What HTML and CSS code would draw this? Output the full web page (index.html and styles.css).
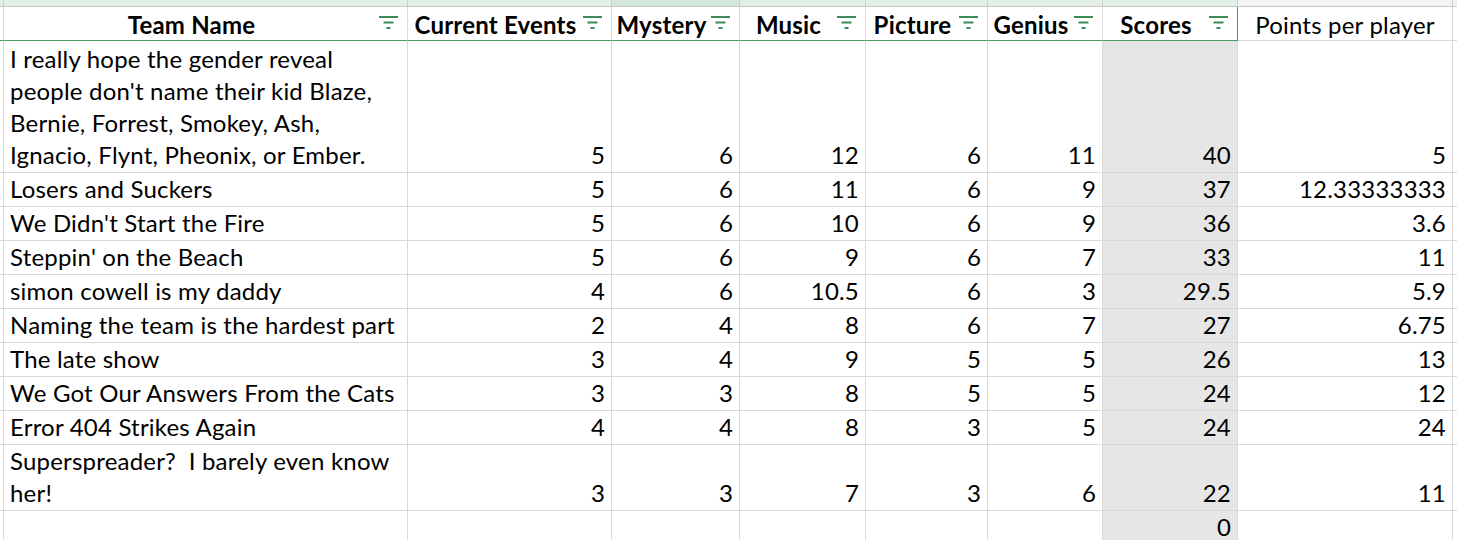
FILE: index.html
```html
<!DOCTYPE html>
<html>
<head>
<meta charset="utf-8">
<link rel="stylesheet" href="styles.css">
</head>
<body>
<div class="sheet">
  <!-- column header strip -->
  <div class="cell top"></div>
  <div class="cell top"></div>
  <div class="cell top"></div>
  <div class="cell top sel"></div>
  <div class="cell top"></div>
  <div class="cell top"></div>
  <div class="cell top"></div>
  <div class="cell top"></div>
  <div class="cell top out"></div>
  <div class="cell top out last"></div>

  <!-- header row -->
  <div class="cell hd stub"></div>
  <div class="cell hd"><span class="ht">Team Name</span><svg class="flt" viewBox="0 0 19 14"><rect x="0" y="0" width="19" height="2"/><rect x="4.5" y="5.5" width="10" height="2"/><rect x="7.5" y="11" width="4" height="2"/></svg></div>
  <div class="cell hd"><span class="ht">Current Events</span><svg class="flt" viewBox="0 0 19 14"><rect x="0" y="0" width="19" height="2"/><rect x="4.5" y="5.5" width="10" height="2"/><rect x="7.5" y="11" width="4" height="2"/></svg></div>
  <div class="cell hd"><span class="ht">Mystery</span><svg class="flt" viewBox="0 0 19 14"><rect x="0" y="0" width="19" height="2"/><rect x="4.5" y="5.5" width="10" height="2"/><rect x="7.5" y="11" width="4" height="2"/></svg></div>
  <div class="cell hd"><span class="ht">Music</span><svg class="flt" viewBox="0 0 19 14"><rect x="0" y="0" width="19" height="2"/><rect x="4.5" y="5.5" width="10" height="2"/><rect x="7.5" y="11" width="4" height="2"/></svg></div>
  <div class="cell hd"><span class="ht">Picture</span><svg class="flt" viewBox="0 0 19 14"><rect x="0" y="0" width="19" height="2"/><rect x="4.5" y="5.5" width="10" height="2"/><rect x="7.5" y="11" width="4" height="2"/></svg></div>
  <div class="cell hd"><span class="ht">Genius</span><svg class="flt" viewBox="0 0 19 14"><rect x="0" y="0" width="19" height="2"/><rect x="4.5" y="5.5" width="10" height="2"/><rect x="7.5" y="11" width="4" height="2"/></svg></div>
  <div class="cell hd hd-end"><span class="ht">Scores</span><svg class="flt" viewBox="0 0 19 14"><rect x="0" y="0" width="19" height="2"/><rect x="4.5" y="5.5" width="10" height="2"/><rect x="7.5" y="11" width="4" height="2"/></svg></div>
  <div class="cell hd-plain">Points per player</div>
  <div class="cell hd-plain last"></div>

  <!-- row 1 -->
  <div class="cell stub"></div>
  <div class="cell name">I really hope the gender reveal<br>people don't name their kid Blaze,<br>Bernie, Forrest, Smokey, Ash,<br>Ignacio, Flynt, Pheonix, or Ember.</div>
  <div class="cell num">5</div><div class="cell num">6</div><div class="cell num">12</div><div class="cell num">6</div><div class="cell num">11</div><div class="cell num score">40</div><div class="cell num">5</div><div class="cell last"></div>

  <div class="cell stub"></div>
  <div class="cell name">Losers and Suckers</div>
  <div class="cell num">5</div><div class="cell num">6</div><div class="cell num">11</div><div class="cell num">6</div><div class="cell num">9</div><div class="cell num score">37</div><div class="cell num">12.33333333</div><div class="cell last"></div>

  <div class="cell stub"></div>
  <div class="cell name">We Didn't Start the Fire</div>
  <div class="cell num">5</div><div class="cell num">6</div><div class="cell num">10</div><div class="cell num">6</div><div class="cell num">9</div><div class="cell num score">36</div><div class="cell num">3.6</div><div class="cell last"></div>

  <div class="cell stub"></div>
  <div class="cell name">Steppin' on the Beach</div>
  <div class="cell num">5</div><div class="cell num">6</div><div class="cell num">9</div><div class="cell num">6</div><div class="cell num">7</div><div class="cell num score">33</div><div class="cell num">11</div><div class="cell last"></div>

  <div class="cell stub"></div>
  <div class="cell name">simon cowell is my daddy</div>
  <div class="cell num">4</div><div class="cell num">6</div><div class="cell num">10.5</div><div class="cell num">6</div><div class="cell num">3</div><div class="cell num score">29.5</div><div class="cell num">5.9</div><div class="cell last"></div>

  <div class="cell stub"></div>
  <div class="cell name">Naming the team is the hardest part</div>
  <div class="cell num">2</div><div class="cell num">4</div><div class="cell num">8</div><div class="cell num">6</div><div class="cell num">7</div><div class="cell num score">27</div><div class="cell num">6.75</div><div class="cell last"></div>

  <div class="cell stub"></div>
  <div class="cell name">The late show</div>
  <div class="cell num">3</div><div class="cell num">4</div><div class="cell num">9</div><div class="cell num">5</div><div class="cell num">5</div><div class="cell num score">26</div><div class="cell num">13</div><div class="cell last"></div>

  <div class="cell stub"></div>
  <div class="cell name">We Got Our Answers From the Cats</div>
  <div class="cell num">3</div><div class="cell num">3</div><div class="cell num">8</div><div class="cell num">5</div><div class="cell num">5</div><div class="cell num score">24</div><div class="cell num">12</div><div class="cell last"></div>

  <div class="cell stub"></div>
  <div class="cell name">Error 404 Strikes Again</div>
  <div class="cell num">4</div><div class="cell num">4</div><div class="cell num">8</div><div class="cell num">3</div><div class="cell num">5</div><div class="cell num score">24</div><div class="cell num">24</div><div class="cell last"></div>

  <div class="cell stub"></div>
  <div class="cell name">Superspreader?&nbsp; I barely even know<br>her!</div>
  <div class="cell num">3</div><div class="cell num">3</div><div class="cell num">7</div><div class="cell num">3</div><div class="cell num">6</div><div class="cell num score">22</div><div class="cell num">11</div><div class="cell last"></div>

  <div class="cell stub"></div>
  <div class="cell name"></div>
  <div class="cell num"></div><div class="cell num"></div><div class="cell num"></div><div class="cell num"></div><div class="cell num"></div><div class="cell num score">0</div><div class="cell num"></div><div class="cell last"></div>
</div>
</body>
</html>
```

FILE: styles.css
```css
html, body {
  margin: 0;
  padding: 0;
  background: #ffffff;
}

body {
  font-family: "Lato", "Open Sans", sans-serif;
  font-size: 24px;
  letter-spacing: 0.2px;
  color: #000000;
  overflow: hidden;
  height: 540px;
}

.sheet {
  display: grid;
  grid-template-columns: 4px 404px 204px 128px 126px 122px 115px 135px 215px 1fr;
  grid-template-rows: 7px 34px 132px repeat(8, 34px) 66px 34px;
}

.cell {
  box-sizing: border-box;
  border-right: 1px solid #d9d9d9;
  border-bottom: 1px solid #d9d9d9;
  min-width: 0;
}

.cell.last {
  border-right: none;
}

.top {
  background: #e3efe6;
  border-right-color: #c9cfca;
  border-bottom-color: #c6c6c6;
}

.top.sel {
  background: #d3e8d9;
}

.top.out {
  background: #f3f3f3;
}

.hd {
  display: flex;
  align-items: center;
  font-weight: 700;
  border-bottom: 1px solid #4c9a66;
  white-space: nowrap;
}

.hd-end {
  border-right: 1px solid #4c9a66;
}

.ht {
  flex: 1;
  text-align: center;
  padding-top: 1px;
}

.flt {
  flex: none;
  width: 19px;
  height: 14px;
  margin-right: 9px;
  margin-top: -2px;
  fill: #3d8a57;
}

.hd-plain {
  display: flex;
  align-items: center;
  justify-content: center;
  padding-top: 1px;
}

.name,
.num {
  display: flex;
  flex-direction: column;
  justify-content: flex-end;
  line-height: 32px;
  padding-bottom: 1px;
  white-space: nowrap;
}

.name {
  padding-left: 6px;
}

.num {
  align-items: flex-end;
  padding-right: 6px;
}

.score {
  background: #e7e6e6;
}
```
